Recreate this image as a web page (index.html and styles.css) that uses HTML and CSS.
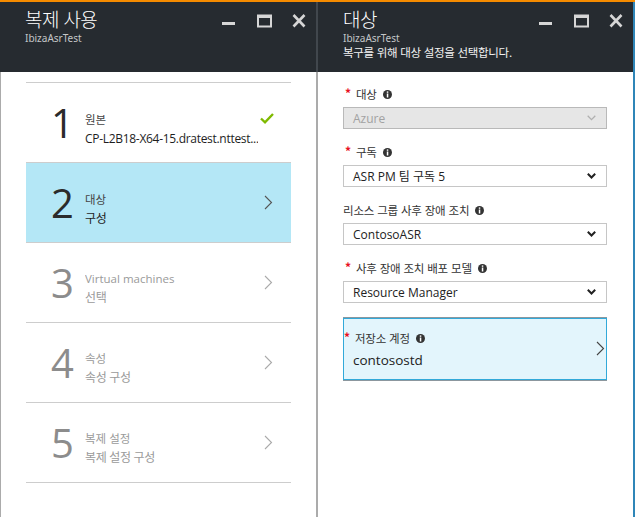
FILE: index.html
```html
<!DOCTYPE html>
<html lang="ko">
<head>
<meta charset="utf-8">
<title>복제 사용</title>
<link rel="stylesheet" href="styles.css">
</head>
<body>
<div class="topbar"></div>
<div class="blades">
  <section class="blade blade-left">
    <header class="blade-header">
      <div class="titles">
        <h1 class="title">복제 사용</h1>
        <div class="sub">IbizaAsrTest</div>
      </div>
      <div class="controls">
        <svg class="ctl" width="15" height="14" viewBox="0 0 15 14"><rect x="0" y="8" width="13" height="3" fill="#d6d6d6"/></svg>
        <svg class="ctl" width="15" height="14" viewBox="0 0 15 14"><rect x="1" y="1.5" width="13" height="11" fill="none" stroke="#d6d6d6" stroke-width="2"/><rect x="1" y="1" width="13" height="3" fill="#d6d6d6"/></svg>
        <svg class="ctl" width="15" height="14" viewBox="0 0 15 14"><path d="M1.5 1 L12.5 12.5 M12.5 1 L1.5 12.5" stroke="#d6d6d6" stroke-width="2.6"/></svg>
      </div>
    </header>
    <div class="blade-body">
      <ul class="steps">
        <li class="step">
          <span class="num">1</span>
          <div class="step-text">
            <div class="step-label">원본</div>
            <div class="step-value">CP-L2B18-X64-15.dratest.nttest...</div>
          </div>
          <svg class="check" width="14" height="11" viewBox="0 0 14 11"><path d="M1 5.5 L5 9.3 L13 1" fill="none" stroke="#7fba00" stroke-width="2.4"/></svg>
        </li>
        <li class="step step-active">
          <span class="num">2</span>
          <div class="step-text">
            <div class="step-label">대상</div>
            <div class="step-value">구성</div>
          </div>
          <svg class="chev" width="9" height="15" viewBox="0 0 9 15"><path d="M1 1 L7.5 7.5 L1 14" fill="none" stroke="#555" stroke-width="1.1"/></svg>
        </li>
        <li class="step step-off">
          <span class="num">3</span>
          <div class="step-text">
            <div class="step-label">Virtual machines</div>
            <div class="step-value">선택</div>
          </div>
          <svg class="chev" width="9" height="15" viewBox="0 0 9 15"><path d="M1 1 L7.5 7.5 L1 14" fill="none" stroke="#aaa" stroke-width="1.1"/></svg>
        </li>
        <li class="step step-off">
          <span class="num">4</span>
          <div class="step-text">
            <div class="step-label">속성</div>
            <div class="step-value">속성 구성</div>
          </div>
          <svg class="chev" width="9" height="15" viewBox="0 0 9 15"><path d="M1 1 L7.5 7.5 L1 14" fill="none" stroke="#aaa" stroke-width="1.1"/></svg>
        </li>
        <li class="step step-off">
          <span class="num">5</span>
          <div class="step-text">
            <div class="step-label">복제 설정</div>
            <div class="step-value">복제 설정 구성</div>
          </div>
          <svg class="chev" width="9" height="15" viewBox="0 0 9 15"><path d="M1 1 L7.5 7.5 L1 14" fill="none" stroke="#aaa" stroke-width="1.1"/></svg>
        </li>
      </ul>
    </div>
  </section>
  <div class="divider"><div class="divider-top"></div></div>
  <section class="blade blade-right">
    <header class="blade-header">
      <div class="titles">
        <h1 class="title">대상</h1>
        <div class="sub">IbizaAsrTest</div>
        <div class="desc">복구를 위해 대상 설정을 선택합니다.</div>
      </div>
      <div class="controls">
        <svg class="ctl" width="15" height="14" viewBox="0 0 15 14"><rect x="0" y="8" width="13" height="3" fill="#d6d6d6"/></svg>
        <svg class="ctl" width="15" height="14" viewBox="0 0 15 14"><rect x="1" y="1.5" width="13" height="11" fill="none" stroke="#d6d6d6" stroke-width="2"/><rect x="1" y="1" width="13" height="3" fill="#d6d6d6"/></svg>
        <svg class="ctl" width="15" height="14" viewBox="0 0 15 14"><path d="M1.5 1 L12.5 12.5 M12.5 1 L1.5 12.5" stroke="#d6d6d6" stroke-width="2.6"/></svg>
      </div>
    </header>
    <div class="blade-body form">
      <div class="field">
        <div class="label"><span class="req">*</span>대상<svg class="info" width="9" height="9" viewBox="0 0 9 9"><circle cx="4.5" cy="4.5" r="4.5" fill="#333"/><rect x="3.8" y="1.4" width="1.5" height="1.4" fill="#fff"/><rect x="3.8" y="3.5" width="1.5" height="4" fill="#fff"/></svg></div>
        <div class="select select-disabled"><span>Azure</span><svg class="caret" width="9" height="6" viewBox="0 0 9 6"><path d="M0.7 0.8 L4.5 4.6 L8.3 0.8" fill="none" stroke="#b0b0b0" stroke-width="1.3"/></svg></div>
      </div>
      <div class="field">
        <div class="label"><span class="req">*</span>구독<svg class="info" width="9" height="9" viewBox="0 0 9 9"><circle cx="4.5" cy="4.5" r="4.5" fill="#333"/><rect x="3.8" y="1.4" width="1.5" height="1.4" fill="#fff"/><rect x="3.8" y="3.5" width="1.5" height="4" fill="#fff"/></svg></div>
        <div class="select"><span>ASR PM 팀 구독 5</span><svg class="caret" width="9" height="6" viewBox="0 0 9 6"><path d="M0.8 0.8 L4.5 4.5 L8.2 0.8" fill="none" stroke="#222" stroke-width="2"/></svg></div>
      </div>
      <div class="field">
        <div class="label">리소스 그룹 사후 장애 조치<svg class="info" width="9" height="9" viewBox="0 0 9 9"><circle cx="4.5" cy="4.5" r="4.5" fill="#333"/><rect x="3.8" y="1.4" width="1.5" height="1.4" fill="#fff"/><rect x="3.8" y="3.5" width="1.5" height="4" fill="#fff"/></svg></div>
        <div class="select"><span>ContosoASR</span><svg class="caret" width="9" height="6" viewBox="0 0 9 6"><path d="M0.8 0.8 L4.5 4.5 L8.2 0.8" fill="none" stroke="#222" stroke-width="2"/></svg></div>
      </div>
      <div class="field">
        <div class="label"><span class="req">*</span>사후 장애 조치 배포 모델<svg class="info" width="9" height="9" viewBox="0 0 9 9"><circle cx="4.5" cy="4.5" r="4.5" fill="#333"/><rect x="3.8" y="1.4" width="1.5" height="1.4" fill="#fff"/><rect x="3.8" y="3.5" width="1.5" height="4" fill="#fff"/></svg></div>
        <div class="select"><span>Resource Manager</span><svg class="caret" width="9" height="6" viewBox="0 0 9 6"><path d="M0.8 0.8 L4.5 4.5 L8.2 0.8" fill="none" stroke="#222" stroke-width="2"/></svg></div>
      </div>
      <div class="picker">
        <div class="picker-text">
          <div class="label picker-label"><span class="req">*</span>저장소 계정<svg class="info" width="9" height="9" viewBox="0 0 9 9"><circle cx="4.5" cy="4.5" r="4.5" fill="#333"/><rect x="3.8" y="1.4" width="1.5" height="1.4" fill="#fff"/><rect x="3.8" y="3.5" width="1.5" height="4" fill="#fff"/></svg></div>
          <div class="picker-value">contosostd</div>
        </div>
        <svg class="picker-chev" width="9" height="15" viewBox="0 0 9 15"><path d="M1 1 L7.5 7.5 L1 14" fill="none" stroke="#444" stroke-width="1.1"/></svg>
      </div>
    </div>
  </section>
</div>
</body>
</html>
```

FILE: styles.css
```css
* { box-sizing: border-box; }
html, body { margin: 0; padding: 0; height: 100%; }
body {
  font-family: "Open Sans", "Noto Sans CJK KR", sans-serif;
  color: #333;
  background: #fff;
  display: flex;
  flex-direction: column;
  overflow: hidden;
}
.topbar { height: 2px; background: #f58b00; flex: none; }
.blades { flex: 1; display: flex; min-height: 0; }
.blade { display: flex; flex-direction: column; }
.blade-left { width: 316px; flex: none; }
.blade-right { flex: 1; border-right: 2px solid #2f86b8; }
.divider { width: 2px; flex: none; background: #ababab; }
.divider-top { height: 70px; background: #41474d; }

.blade-header {
  height: 70px;
  flex: none;
  background: #262b30;
  display: flex;
  align-items: flex-start;
  padding: 4px 9px 0 25px;
}
.titles { flex: 1; min-width: 0; }
.title {
  margin: 0;
  font-family: "Noto Sans CJK KR", sans-serif;
  font-weight: 300;
  font-size: 19px;
  line-height: 26px;
  color: #fff;
  letter-spacing: -0.6px;
}
.sub {
  font-family: "Noto Sans", "Open Sans", sans-serif;
  font-size: 10px;
  line-height: 12px;
  color: #c4c6c8;
  margin-top: 0;
}
.desc {
  font-family: "Noto Sans CJK KR", sans-serif;
  font-size: 11.5px;
  line-height: 16px;
  color: #f2f2f2;
  letter-spacing: -0.3px;
  margin-top: 0;
}
.controls { display: flex; gap: 20px; margin-top: 8px; }
.ctl { display: block; }

.blade-body { flex: 1; background: #fff; }
.blade-left .blade-body { border-left: 1px solid #ababab; padding: 10px 25px 0 25px; }

.steps { list-style: none; margin: 0; padding: 0; border-top: 1px solid #cdcdcd; }
.step {
  height: 80px;
  border-bottom: 1px solid #cdcdcd;
  display: flex;
  align-items: center;
  color: #333;
}
.step-active { background: #b4e7f6; }
.num {
  flex: none;
  width: 34px;
  margin-left: 25px;
  font-family: "Open Sans", sans-serif;
  font-weight: 400;
  font-size: 40px;
  line-height: 40px;
  color: #2b2b2b;
}
.step-text {
  flex: 1;
  min-width: 0;
  padding-top: 13px;
  white-space: nowrap;
  overflow: hidden;
}
.step-label {
  font-family: "Open Sans", "Noto Sans CJK KR", sans-serif;
  font-size: 11.5px;
  line-height: 19px;
  color: #444;
}
.step-value {
  font-family: "Open Sans", "Noto Sans CJK KR", sans-serif;
  font-size: 12px;
  line-height: 19px;
  color: #1e1e1e;
  letter-spacing: -0.3px;
}
.step-off .step-text { padding-top: 11px; }
.step-off .num { color: #8c8c8c; }
.step-off .step-label, .step-off .step-value { color: #9a9a9a; }
.check { flex: none; margin: 0 17px 8px 2px; }
.chev { flex: none; margin: 0 18px 0 8px; }

.form { padding: 14px 26px 0 25px; }
.field { margin-bottom: 15px; }
.label {
  display: flex;
  align-items: center;
  font-family: "Noto Sans CJK KR", sans-serif;
  font-size: 11.5px;
  line-height: 16px;
  color: #333;
  margin-bottom: 5px;
  letter-spacing: -0.2px;
}
.req { color: #e81123; font-weight: bold; margin: 0 5px 0 2px; font-size: 12px; position: relative; top: -1px; }
.info { margin-left: 6px; flex: none; }
.select {
  height: 22px;
  border: 1px solid #c6c6c6;
  background: #fff;
  display: flex;
  align-items: center;
  padding: 0 10px 0 9px;
  font-family: "Open Sans", "Noto Sans CJK KR", sans-serif;
  font-size: 12px;
  color: #222;
}
.select span { flex: 1; }
.select-disabled { background: #e6e6e6; border-color: #b9b9b9; color: #a2a2a2; }
.caret { flex: none; }

.picker {
  height: 62px;
  background: #e3f5fc;
  border: 1px solid #32a9d9;
  box-shadow: 0 -1px 0 #8c979e, 0 1px 0 #8c979e;
  display: flex;
  align-items: center;
}
.picker-text { flex: 1; align-self: flex-start; padding-top: 11px; }
.picker-label { margin-bottom: 4px; }
.picker-label .req { margin-left: 0; }
.picker-value {
  font-family: "Open Sans", sans-serif;
  font-size: 13.5px;
  line-height: 20px;
  color: #222;
  padding-left: 9px;
}
.picker-chev { flex: none; margin: 0 1px 2px 0; }
```
